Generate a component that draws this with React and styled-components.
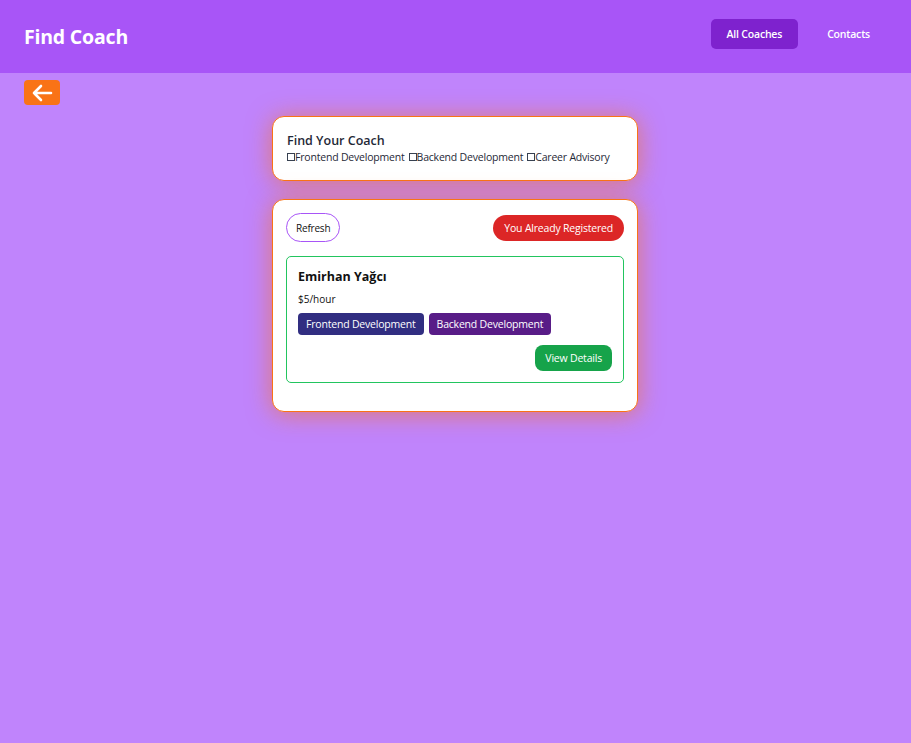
import styled, { createGlobalStyle } from 'styled-components';

const GlobalStyle = createGlobalStyle`
	html, body {
		margin: 0;
		padding: 0;
		min-height: 100%;
		background-color: #c084fc;
		font-family: 'Open Sans', 'Noto Sans', sans-serif;
	}
	* {
		box-sizing: border-box;
	}
`;

const Page = styled.div`
	min-height: 743px;
	background-color: #c084fc;
`;

const Header = styled.header`
	height: 73px;
	background-color: #a855f7;
	display: flex;
	align-items: center;
	justify-content: space-between;
	padding: 0 24px;
`;

const Brand = styled.h1`
	margin: 0;
	font-size: 19.5px;
	font-weight: 700;
	color: #fff;
	letter-spacing: -0.2px;
`;

const Nav = styled.nav`
	display: flex;
	gap: 13px;
	margin-right: 1px;
	margin-bottom: 5px;
`;

const NavLink = styled.a`
	display: flex;
	align-items: center;
	height: 30px;
	padding: 0 16px;
	border-radius: 5px;
	font-size: 10.5px;
	font-weight: 600;
	color: #fff;
	letter-spacing: -0.2px;
	background-color: ${(props) => (props.$active ? '#7e22ce' : 'transparent')};
`;

const BackBar = styled.div`
	padding: 7px 24px 0;
`;

const BackButton = styled.button`
	width: 36px;
	height: 25px;
	border: none;
	border-radius: 4px;
	background-color: #f97316;
	display: flex;
	align-items: center;
	justify-content: center;
	padding: 0;
	cursor: pointer;
`;

const Main = styled.main`
	display: flex;
	flex-direction: column;
	align-items: center;
	gap: 18px;
	margin-top: 11px;
	padding-right: 1px;
`;

const Card = styled.section`
	width: 366px;
	background-color: #fff;
	border: 1px solid #f97316;
	border-radius: 12px;
	box-shadow: 0 2px 24px rgba(249, 115, 22, 0.6);
	padding: ${(props) => props.$padding};
`;

const Title = styled.h2`
	margin: 0;
	font-size: 12.5px;
	font-weight: 600;
	color: #1f2937;
	line-height: 16px;
`;

const Filters = styled.div`
	display: flex;
	gap: 4px;
	font-size: 10.5px;
	color: #1f2937;
	letter-spacing: -0.2px;
	line-height: 16px;
`;

const FilterLabel = styled.label`
	display: flex;
	align-items: center;
`;

const Box = styled.input`
	appearance: none;
	width: 8px;
	height: 8px;
	margin: 0;
	border: 1px solid #374151;
	background: #fff;
`;

const Controls = styled.div`
	display: flex;
	justify-content: space-between;
	align-items: center;
	margin-bottom: 14px;
`;

const RefreshButton = styled.button`
	height: 29px;
	padding: 0 9px;
	border: 1px solid #a855f7;
	border-radius: 15px;
	background: #fff;
	font-family: inherit;
	font-size: 10px;
	color: #111;
	letter-spacing: -0.2px;
`;

const Registered = styled.span`
	height: 26px;
	display: flex;
	align-items: center;
	padding: 0 11px;
	border-radius: 13px;
	background-color: #dc2626;
	color: #fff;
	font-size: 10.5px;
	letter-spacing: -0.2px;
`;

const CoachItem = styled.article`
	border: 1px solid #22c55e;
	border-radius: 5px;
	padding: 11px 11px 11px;
`;

const CoachName = styled.h3`
	margin: 0;
	font-size: 12.5px;
	font-weight: 700;
	color: #111;
	line-height: 18px;
`;

const Rate = styled.p`
	margin: 6px 0 7px;
	font-size: 10px;
	color: #111;
	line-height: 14px;
`;

const Badges = styled.div`
	display: flex;
	gap: 5px;
`;

const Badge = styled.span`
	height: 22px;
	display: flex;
	align-items: center;
	padding: 0 8px;
	border-radius: 4px;
	background-color: ${(props) => props.$color};
	color: #fff;
	font-size: 10.5px;
	letter-spacing: -0.2px;
`;

const Actions = styled.div`
	display: flex;
	justify-content: flex-end;
	margin-top: 10px;
`;

const DetailsButton = styled.a`
	height: 26px;
	display: flex;
	align-items: center;
	padding: 0 10px;
	border-radius: 8px;
	background-color: #16a34a;
	color: #fff;
	font-size: 10.5px;
	letter-spacing: -0.2px;
`;

const areas = ['Frontend Development', 'Backend Development', 'Career Advisory'];

export default function App() {
	return (
		<Page>
			<GlobalStyle />
			<Header>
				<Brand>Find Coach</Brand>
				<Nav>
					<NavLink $active>All Coaches</NavLink>
					<NavLink>Contacts</NavLink>
				</Nav>
			</Header>
			<BackBar>
				<BackButton aria-label="Back">
					<svg width="22" height="18" viewBox="0 0 22 18" fill="none" stroke="#fff" strokeWidth="2.6" strokeLinecap="round" strokeLinejoin="round">
						<path d="M20 9H3M10 2L3 9l7 7" />
					</svg>
				</BackButton>
			</BackBar>
			<Main>
				<Card $padding="16px 14px 15px">
					<Title>Find Your Coach</Title>
					<Filters>
						{areas.map((area) => (
							<FilterLabel key={area}>
								<Box type="checkbox" />
								{area}
							</FilterLabel>
						))}
					</Filters>
				</Card>
				<Card $padding="13px 13px 28px">
					<Controls>
						<RefreshButton>Refresh</RefreshButton>
						<Registered>You Already Registered</Registered>
					</Controls>
					<CoachItem>
						<CoachName>Emirhan Yağcı</CoachName>
						<Rate>$5/hour</Rate>
						<Badges>
							<Badge $color="#312e81">Frontend Development</Badge>
							<Badge $color="#581c87">Backend Development</Badge>
						</Badges>
						<Actions>
							<DetailsButton>View Details</DetailsButton>
						</Actions>
					</CoachItem>
				</Card>
			</Main>
		</Page>
	);
}
